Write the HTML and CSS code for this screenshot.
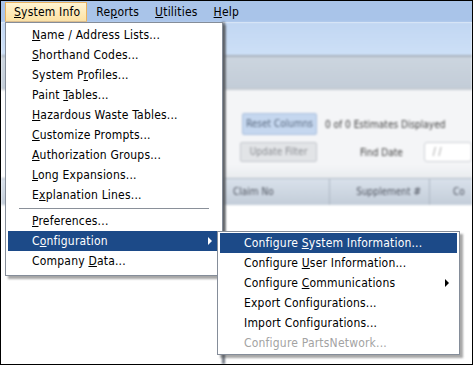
FILE: index.html
```html
<!DOCTYPE html>
<html lang="en">
<head>
    <meta charset="UTF-8">
    <title>System Info Menu</title>
    <link rel="stylesheet" href="styles.css">
</head>
<body>
    <div class="screen">
        <div class="menubar">
            <span class="mb-item active"><u>S</u>ystem Info</span>
            <span class="mb-item">Re<u>p</u>orts</span>
            <span class="mb-item"><u>U</u>tilities</span>
            <span class="mb-item"><u>H</u>elp</span>
        </div>

        <!-- blurred window behind the menus -->
        <div class="app">
            <div class="left-win">
                <div class="band-top"></div>
                <div class="band-tool"></div>
                <div class="panel"></div>
                <div class="grid-head"></div>
            </div>
            <div class="main-win">
                <div class="band-top"></div>
                <div class="band-tool"></div>
                <div class="panel">
                    <div class="panel-row first">
                        <span class="btn btn-blue">Reset Columns</span>
                        <span class="status">0 of 0 Estimates Displayed</span>
                    </div>
                    <div class="panel-row">
                        <span class="btn">Update Filter</span>
                        <span class="find-label">Find Date</span>
                        <span class="date-box">/ /</span>
                    </div>
                </div>
                <div class="grid-head">
                    <span class="col col-claim">Claim No</span>
                    <span class="col col-supp">Supplement #</span>
                    <span class="col col-co">Co</span>
                </div>
            </div>
        </div>

        <div class="menu main-menu">
            <div class="item"><span><u>N</u>ame / Address Lists...</span></div>
            <div class="item"><span><u>S</u>horthand Codes...</span></div>
            <div class="item"><span>System P<u>r</u>ofiles...</span></div>
            <div class="item"><span>Paint <u>T</u>ables...</span></div>
            <div class="item"><span><u>H</u>azardous Waste Tables...</span></div>
            <div class="item"><span><u>C</u>ustomize Prompts...</span></div>
            <div class="item"><span><u>A</u>uthorization Groups...</span></div>
            <div class="item"><span><u>L</u>ong Expansions...</span></div>
            <div class="item"><span>E<u>x</u>planation Lines...</span></div>
            <div class="separator"></div>
            <div class="item"><span><u>P</u>references...</span></div>
            <div class="item selected"><span>C<u>o</u>nfiguration</span><span class="arrow"></span></div>
            <div class="item"><span>Company <u>D</u>ata...</span></div>
        </div>

        <div class="menu sub-menu">
            <div class="item selected"><span>Configure <u>S</u>ystem Information...</span></div>
            <div class="item"><span>Configure <u>U</u>ser Information...</span></div>
            <div class="item"><span>Configure <u>C</u>ommunications</span><span class="arrow"></span></div>
            <div class="item"><span>Export Configurations...</span></div>
            <div class="item"><span>Import Configurations...</span></div>
            <div class="item disabled"><span>Configure PartsNetwork...</span></div>
        </div>
    </div>
</body>
</html>
```

FILE: styles.css
```css
body {
    margin: 0;
    font-family: "DejaVu Sans Condensed", "Liberation Sans", sans-serif;
    font-size: 12px;
    letter-spacing: 0.2px;
    color: #000;
}
.screen {
    position: relative;
    width: 473px;
    height: 365px;
    box-sizing: border-box;
    border: 1px solid #000;
    background: #fff;
    overflow: hidden;
}

/* menu bar */
.menubar {
    display: flex;
    height: 21px;
    padding-left: 4px;
    background: #a9c4e9;
}
.mb-item {
    margin-top: 1px;
    padding: 0 6px 0 8px;
    border: 1px solid transparent;
    line-height: 18px;
}
.mb-item.active {
    background: linear-gradient(#fff4d2, #fde2a3);
    border-color: #e9b25e;
}

/* background window */
.app {
    display: flex;
    height: 342px;
    letter-spacing: 0;
    filter: blur(0.9px);
}
.left-win {
    width: 221px;
}
.main-win {
    flex: 1;
    border-left: 3px solid #6e7580;
}
.band-top {
    height: 33px;
    background: linear-gradient(#c1d6f2, #cde0f7);
}
.band-tool {
    height: 31px;
    border-top: 2px solid #a9b3bf;
    background: linear-gradient(#ccd5df, #c3cdd8);
}
.panel {
    box-sizing: border-box;
    height: 90px;
    padding-top: 23px;
    border-top: 2px solid #c4cad2;
    background: linear-gradient(#f4f5f7 85%, #e9ecef);
}
.left-win .panel {
    background: #fff;
}
.panel-row {
    display: flex;
    align-items: center;
    height: 20px;
    padding-left: 15px;
    font-size: 10px;
    white-space: nowrap;
    color: #555;
}
.panel-row.first {
    height: 22px;
    margin-bottom: 7px;
    padding-left: 17px;
}
.btn {
    width: 77px;
    height: 20px;
    box-sizing: border-box;
    border: 1px solid #c4c8ce;
    border-radius: 2px;
    background: #e2e4e7;
    line-height: 18px;
    text-align: center;
    color: #8a8d92;
}
.btn-blue {
    width: 75px;
    height: 22px;
    line-height: 20px;
    background: #c5d7ef;
    border-color: #aac0de;
    color: #5a6a80;
}
.status {
    margin-left: 8px;
    color: #3e3e3e;
}
.find-label {
    margin-left: 43px;
    color: #3e3e3e;
}
.date-box {
    flex: 1;
    height: 20px;
    box-sizing: border-box;
    margin-left: 21px;
    padding-left: 8px;
    border: 1px solid #cdd1d6;
    border-radius: 3px;
    background: #fff;
    line-height: 18px;
    color: #999;
}
.grid-head {
    display: flex;
    align-items: center;
    height: 26px;
    border-top: 1px solid #b3bcc7;
    background: linear-gradient(#d9e1eb, #c3cdd9);
    font-size: 10px;
    white-space: nowrap;
    color: #505560;
}
.col {
    height: 100%;
    box-sizing: border-box;
    line-height: 25px;
}
.col-claim {
    width: 105px;
    padding-left: 8px;
    border-right: 1px solid #aeb8c4;
}
.col-supp {
    width: 100px;
    padding-right: 8px;
    text-align: right;
    border-right: 1px solid #aeb8c4;
}
.col-co {
    padding-left: 23px;
}

/* drop-down menus */
.menu {
    position: absolute;
    box-sizing: border-box;
    border: 1px solid #858d99;
    background: #fff;
    box-shadow: 3px 3px 2px rgba(60, 60, 60, 0.45);
}
.main-menu {
    left: 4px;
    top: 21px;
    width: 218px;
    height: 254px;
    padding-top: 2px;
}
.sub-menu {
    left: 216px;
    top: 230px;
    width: 243px;
    height: 124px;
    padding-top: 1px;
}
.item {
    display: flex;
    align-items: center;
    justify-content: space-between;
    height: 20px;
    margin: 0 2px;
    padding: 0 8px 0 24px;
    white-space: nowrap;
}
.item.selected {
    background: #1c4a88;
    color: #fff;
}
.item.disabled {
    color: #a3a3a3;
}
.separator {
    height: 1px;
    margin: 3px 13px 2px 13px;
    background: #8a9099;
}
.arrow {
    width: 0;
    height: 0;
    border-top: 4px solid transparent;
    border-bottom: 4px solid transparent;
    border-left: 4px solid #000;
}
.selected .arrow {
    border-left-color: #fff;
}
```
